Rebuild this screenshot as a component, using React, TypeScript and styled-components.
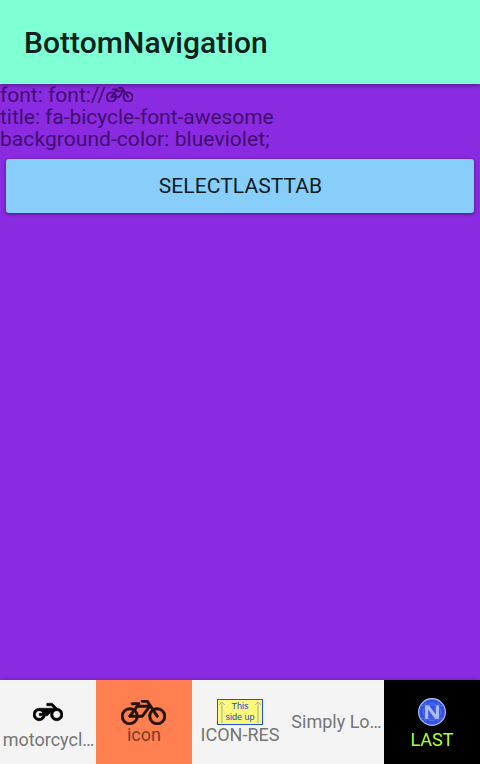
import React from "react";
import styled, { createGlobalStyle } from "styled-components";

const GlobalStyle = createGlobalStyle`
  * { box-sizing: border-box; }
  body { margin: 0; font-family: Roboto, "Liberation Sans", sans-serif; }
`;

const Screen = styled.div`
  display: flex;
  flex-direction: column;
  height: 764px;
  width: 480px;
  overflow: hidden;
  background: #8a2be2;
`;

const ActionBar = styled.header`
  flex: none;
  display: flex;
  align-items: center;
  height: 84px;
  padding: 2px 24px 0;
  background: #7fffd4;
  box-shadow: 0 1px 5px rgba(0, 0, 0, 0.45);
`;

const Title = styled.h1`
  margin: 0;
  font-size: 30px;
  font-weight: 500;
  line-height: 36px;
  letter-spacing: 0.05px;
  color: #11211d;
`;

const Content = styled.main`
  flex: 1;
  display: flex;
  flex-direction: column;
`;

const Details = styled.div`
  font-size: 21px;
  line-height: 22px;
  color: #410e70;
`;

const Line = styled.div<{ $spacing?: number }>`
  display: flex;
  height: 22px;
  white-space: pre;
  letter-spacing: ${(p) => p.$spacing ?? 0}px;
`;

const SelectButton = styled.button`
  height: 54px;
  margin: 9px 6px 0;
  padding: 0 0 0 1px;
  border: 0;
  border-radius: 3px;
  background: #87cefa;
  box-shadow: 0 1px 4px rgba(0, 0, 0, 0.45);
  font: 400 21px/54px Roboto, "Liberation Sans", sans-serif;
  letter-spacing: 0.08px;
  color: #121b21;
`;

const TabBar = styled.nav`
  flex: none;
  display: grid;
  grid-template-columns: repeat(5, 96px);
  height: 84px;
  box-shadow: 0 0 4px rgba(0, 0, 0, 0.25);
`;

const Tab = styled.div<{ $bg?: string; $top: number }>`
  display: flex;
  flex-direction: column;
  align-items: center;
  height: 84px;
  padding-top: ${(p) => p.$top}px;
  background: ${(p) => p.$bg ?? "#f4f4f4"};
`;

const Label = styled.span<{ $color?: string; $indent?: number }>`
  padding-left: ${(p) => p.$indent ?? 0}px;
  font-size: 18px;
  line-height: 20px;
  white-space: nowrap;
  color: ${(p) => p.$color ?? "#757575"};
`;

const Icon = styled.svg<{ $gap?: number; $right?: number; $top?: number }>`
  display: block;
  flex: none;
  margin: ${(p) => p.$top ?? 0}px ${(p) => p.$right ?? 0}px ${(p) => p.$gap ?? 0}px 0;
`;

const Sign = styled.div`
  display: grid;
  grid-template-columns: 8px 28px 8px;
  width: 46px;
  height: 26px;
  border: 1px solid #2450e0;
  background: #fcf87c;
`;

const SignText = styled.div`
  display: flex;
  flex-direction: column;
  align-items: center;
  padding-top: 1px;
  font: 9px/11px "Liberation Sans", sans-serif;
  white-space: nowrap;
  color: #2148d8;
`;

const BICYCLE =
  "M762 1152h-314q-40 0-57.5-35t6.5-67l188-251q-65-31-137-31-132 0-226 94t-94 226 94 226 226 94q115 0 203-72.5t111-183.5zm-186-128h186q-18-85-75-148zm480 0l288-384h-480l-99 132q105 103 126 252h165zm1120 64q0-132-94-226t-226-94q-60 0-121 24l174 260q15 23 10 49t-27 40q-15 11-36 11-35 0-53-29l-174-260q-93 95-93 225 0 132 94 226t226 94 226-94 94-226zm128 0q0 185-131.5 316.5t-316.5 131.5-316.5-131.5-131.5-316.5q0-97 39.5-183.5t109.5-149.5l-65-98-353 469q-18 26-51 26h-197q-23 164-149 274t-294 110q-185 0-316.5-131.5t-131.5-316.5 131.5-316.5 316.5-131.5q114 0 215 55l137-183h-224q-26 0-45-19t-19-45 19-45 45-19h384v128h435l-85-128h-222q-26 0-45-19t-19-45 19-45 45-19h256q33 0 53 28l267 400q91-44 192-44 185 0 316.5 131.5t131.5 316.5z";

const MOTORCYCLE =
  "M19.44 9.03L15.41 5H11v2h3.59l2 2H5c-2.8 0-5 2.2-5 5s2.2 5 5 5c2.46 0 4.45-1.69 4.9-4h1.65l2.77-2.77c-.21.54-.32 1.14-.32 1.77 0 2.8 2.2 5 5 5s5-2.2 5-5c0-2.65-1.97-4.77-4.56-4.97zM7.82 15C7.4 16.15 6.28 17 5 17c-1.63 0-3-1.37-3-3s1.37-3 3-3c1.28 0 2.4.85 2.82 2H5v2h2.82zM19 17c-1.66 0-3-1.34-3-3s1.34-3 3-3 3 1.34 3 3-1.34 3-3 3z";

function SignArrow() {
  return (
    <Icon width="8" height="24" viewBox="0 0 8 24">
      <path d="M4 3v20" stroke="#ccd08f" strokeWidth="2" />
      <path d="M1 5L4 2l3 3" fill="none" stroke="#b2bb98" strokeWidth="1" />
    </Icon>
  );
}

function BadgeIcon() {
  return (
    <Icon width="28" height="28" viewBox="0 0 28 28" $gap={4}>
      <circle cx="14" cy="14" r="13.4" fill="#3353e6" stroke="#b9c6fa" strokeWidth="1.1" />
      <g fill="none" stroke="#7289f0" strokeWidth="0.6">
        <circle cx="14" cy="14" r="8.5" />
        <path d="M2 7.5h24M2 20.5h24M7.5 3v22M20.5 3v22M4 4l20 20M24 4L4 24" opacity="0.7" />
      </g>
      <path
        d="M8.6 19.4V8.8h1.5l7.8 10.6h1.5V8.8"
        fill="none"
        stroke="#a9bbfb"
        strokeWidth="3.2"
        strokeLinejoin="round"
        strokeLinecap="round"
      />
    </Icon>
  );
}

export default function App() {
  return (
    <>
      <GlobalStyle />
      <Screen>
        <ActionBar>
          <Title>BottomNavigation</Title>
        </ActionBar>
        <Content>
          <Details>
            <Line>
              font: font://
              <Icon width="27.5" height="15.5" viewBox="0 256 2304 1280" $top={2.5}>
                <path d={BICYCLE} fill="#410e70" stroke="#410e70" strokeWidth="30" />
              </Icon>
            </Line>
            <Line $spacing={-0.04}>title: fa-bicycle-font-awesome</Line>
            <Line $spacing={0.06}>background-color: blueviolet;</Line>
          </Details>
          <SelectButton>SELECTLASTTAB</SelectButton>
        </Content>
        <TabBar>
          <Tab $top={16.5}>
            <Icon width="30" height="30" viewBox="0 0 24 24" $gap={3.5}>
              <path d={MOTORCYCLE} stroke="#000" strokeWidth="0.4" />
            </Icon>
            <Label $indent={1}>motorcycl…</Label>
          </Tab>
          <Tab $top={20} $bg="#ff7f50">
            <Icon width="45" height="25" viewBox="0 256 2304 1280" $right={2}>
              <path d={BICYCLE} fill="#23120b" stroke="#23120b" strokeOpacity="0.5" strokeWidth="50" />
            </Icon>
            <Label $color="#7b3d27">icon</Label>
          </Tab>
          <Tab $top={19}>
            <Sign>
              <SignArrow />
              <SignText>
                <span>This</span>
                <span>side up</span>
              </SignText>
              <SignArrow />
            </Sign>
            <Label>ICON-RES</Label>
          </Tab>
          <Tab $top={32}>
            <Label $indent={1}>Simply Lo…</Label>
          </Tab>
          <Tab $top={18} $bg="#000">
            <BadgeIcon />
            <Label $color="#adff2f">LAST</Label>
          </Tab>
        </TabBar>
      </Screen>
    </>
  );
}
